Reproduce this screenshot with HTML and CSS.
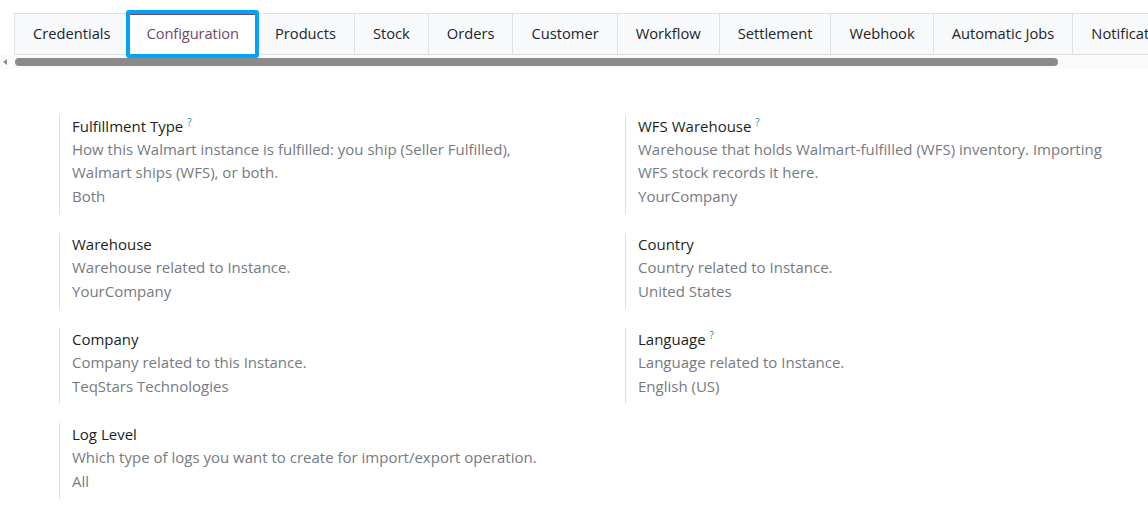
FILE: index.html
```html
<!DOCTYPE html>
<html>
<head>
    <title>Configuration</title>
    <meta charset="UTF-8">
    <link rel="stylesheet" href="styles.css">
</head>
<body>
    <div class="tabs-wrap">
        <ul class="tabs">
            <li>Credentials</li>
            <li class="active">Configuration</li>
            <li>Products</li>
            <li>Stock</li>
            <li>Orders</li>
            <li>Customer</li>
            <li>Workflow</li>
            <li>Settlement</li>
            <li>Webhook</li>
            <li>Automatic Jobs</li>
            <li>Notifications</li>
        </ul>
        <div class="scrollbar">
            <span class="arrow"></span>
            <span class="thumb"></span>
        </div>
    </div>

    <section class="fields">
        <div class="field">
            <div class="label">Fulfillment Type <sup>?</sup></div>
            <div class="help">How this Walmart instance is fulfilled: you ship (Seller Fulfilled),<br>Walmart ships (WFS), or both.</div>
            <div class="value">Both</div>
        </div>
        <div class="field">
            <div class="label">WFS Warehouse <sup>?</sup></div>
            <div class="help">Warehouse that holds Walmart-fulfilled (WFS) inventory. Importing<br>WFS stock records it here.</div>
            <div class="value">YourCompany</div>
        </div>
        <div class="field">
            <div class="label">Warehouse</div>
            <div class="help">Warehouse related to Instance.</div>
            <div class="value">YourCompany</div>
        </div>
        <div class="field">
            <div class="label">Country</div>
            <div class="help">Country related to Instance.</div>
            <div class="value">United States</div>
        </div>
        <div class="field">
            <div class="label">Company</div>
            <div class="help">Company related to this Instance.</div>
            <div class="value">TeqStars Technologies</div>
        </div>
        <div class="field">
            <div class="label">Language <sup>?</sup></div>
            <div class="help">Language related to Instance.</div>
            <div class="value">English (US)</div>
        </div>
        <div class="field">
            <div class="label">Log Level</div>
            <div class="help">Which type of logs you want to create for import/export operation.</div>
            <div class="value">All</div>
        </div>
    </section>
</body>
</html>
```

FILE: styles.css
```css
body {
    margin: 0;
    width: 1148px;
    overflow: hidden;
    background: white;
    font-family: "Open Sans", "Noto Sans", sans-serif;
    font-size: 15px;
    color: #212529;
}

.tabs-wrap {
    padding-top: 13px;
    overflow: hidden;
}

.tabs {
    display: flex;
    margin: 0 0 0 14px;
    padding: 0;
    list-style: none;
    white-space: nowrap;
}

.tabs li {
    height: 40px;
    line-height: 39px;
    padding: 0 18px;
    background: #f8f9fa;
    border: 1px solid #dee2e6;
    border-right: none;
    color: #212529;
    font-size: 14.7px;
}

.tabs li.active {
    position: relative;
    padding: 0 17px;
    background: white;
    color: #714b67;
    border-top: 2px solid #714b67;
    height: 39px;
    line-height: 36px;
    letter-spacing: -0.1px;
}

.tabs li.active::after {
    content: "";
    position: absolute;
    left: -4px;
    right: -3px;
    top: -5px;
    bottom: -4px;
    border: 4px solid #00a3f5;
    border-radius: 3px;
}

.scrollbar {
    display: flex;
    align-items: center;
    height: 14px;
    background: #fafafa;
}

.arrow {
    width: 0;
    height: 0;
    margin: 0 8px 0 3px;
    border-top: 3.5px solid transparent;
    border-bottom: 3.5px solid transparent;
    border-right: 4px solid #8a8a8a;
}

.thumb {
    width: 1043px;
    height: 8px;
    border-radius: 4px;
    background: #8a8a8a;
}

.fields {
    display: grid;
    grid-template-columns: 566px 566px;
    row-gap: 19px;
    margin: 46px 0 0 59px;
}

.field {
    border-left: 1px solid #dcdfe3;
    padding: 0 0 6px 12px;
}

.label {
    line-height: 23px;
    color: #1b1f24;
}

.label sup {
    color: #0f8eb0;
    font-size: 10px;
    vertical-align: 6px;
    line-height: 0;
}

.help {
    line-height: 23px;
    color: #767a81;
}

.value {
    line-height: 24px;
    color: #767a81;
}
```
